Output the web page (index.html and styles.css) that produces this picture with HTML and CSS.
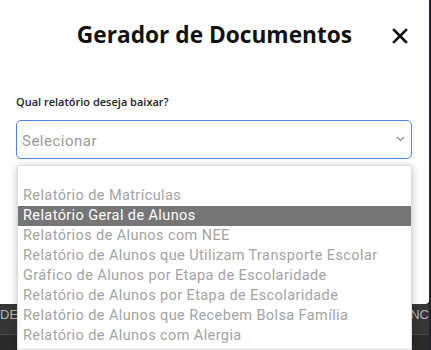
FILE: index.html
```html
<!DOCTYPE html>
<html lang="pt">
<head>
<meta charset="utf-8">
<title>Gerador de Documentos</title>
<link rel="stylesheet" href="styles.css">
</head>
<body>
<div class="page">
  <div class="modal">
    <div class="header">
      <span></span>
      <h1 class="title">Gerador de Documentos</h1>
      <button class="close" aria-label="Fechar">
        <svg width="16" height="16" viewBox="0 0 16 16"><path d="M2 2 L14 14 M14 2 L2 14" stroke="#111" stroke-width="2.6" stroke-linecap="square"/></svg>
      </button>
    </div>
    <label class="label">Qual relatório deseja baixar?</label>
    <div class="select-wrap">
      <div class="select">
        <span class="placeholder">Selecionar</span>
        <svg class="chev" width="9" height="6" viewBox="0 0 9 6"><path d="M1 1 L4.5 4.5 L8 1" fill="none" stroke="#888" stroke-width="1.2"/></svg>
      </div>
      <ul class="options">
        <li class="opt"></li>
        <li class="opt">Relatório de Matrículas</li>
        <li class="opt active">Relatório Geral de Alunos</li>
        <li class="opt">Relatórios de Alunos com NEE</li>
        <li class="opt">Relatório de Alunos que Utilizam Transporte Escolar</li>
        <li class="opt">Gráfico de Alunos por Etapa de Escolaridade</li>
        <li class="opt">Relatório de Alunos por Etapa de Escolaridade</li>
        <li class="opt">Relatório de Alunos que Recebem Bolsa Família</li>
        <li class="opt">Relatório de Alunos com Alergia</li>
      </ul>
    </div>
  </div>
  <div class="below">
    <div class="below-row"><span class="b-left">DE</span><span class="b-right">ANC</span></div>
  </div>
</div>
</body>
</html>
```
FILE: styles.css
```css
* { box-sizing: border-box; }
html, body { margin: 0; padding: 0; }
body {
  background: #2a2a2a;
  width: 431px;
  height: 350px;
  overflow: hidden;
  font-family: "Open Sans", "Liberation Sans", sans-serif;
}
.page {
  display: flex;
  flex-direction: column;
  padding-right: 2px;
  background: #1e2630;
  height: 350px;
}
.modal {
  background: #fff;
  height: 304px;
  border-bottom-right-radius: 4px;
  padding: 19px 0 0 16px;
  position: relative;
}
.header {
  display: grid;
  grid-template-columns: 1fr auto 1fr;
  align-items: center;
  height: 32px;
  margin-left: -16px;
}
.title {
  margin: 0;
  font-family: "Open Sans", sans-serif;
  font-weight: 700;
  font-size: 22.7px;
  color: #111;
  letter-spacing: 0;
  line-height: 32px;
}
.close {
  justify-self: end;
  margin-right: 20px;
  margin-top: 2px;
  width: 18px;
  height: 18px;
  padding: 0;
  border: 0;
  background: none;
  display: flex;
  align-items: center;
  justify-content: center;
}
.label {
  display: block;
  margin-top: 44px;
  font-family: "Open Sans", sans-serif;
  font-weight: 600;
  font-size: 11px;
  line-height: 14px;
  color: #222;
}
.select-wrap {
  position: relative;
  margin-top: 11px;
  width: 396px;
}
.select {
  height: 39px;
  border: 1px solid #4a86e8;
  border-radius: 5px;
  display: flex;
  align-items: center;
  justify-content: space-between;
  padding: 0 6px 0 5px;
}
.placeholder {
  font-family: Roboto, "Liberation Sans", sans-serif;
  font-size: 15px;
  letter-spacing: 0.5px;
  color: #9a9a9a;
  margin-top: 3px;
}
.chev { margin-top: -1px; }
.options {
  position: absolute;
  left: 1px;
  top: 45px;
  width: 395px;
  margin: 0;
  padding: 0 0 3px;
  list-style: none;
  background: #fff;
  border: 1px solid #dcdcdc;
  box-shadow: 0 2px 8px rgba(0,0,0,0.25);
  z-index: 2;
}
.opt {
  height: 20px;
  line-height: 20px;
  padding-left: 5px;
  font-family: Roboto, "Liberation Sans", sans-serif;
  font-size: 14.5px;
  letter-spacing: 0.4px;
  color: #a3a3a3;
  white-space: nowrap;
}
.opt.active {
  background: #767676;
  color: #fff;
}
.below {
  flex: 1;
  display: flex;
  flex-direction: column;
  background: #2b2b2b;
}
.below-row {
  height: 31px;
  background: #363636;
  border-bottom: 1px solid #4a4a4a;
  display: flex;
  justify-content: space-between;
  color: #b8b8b8;
  font-family: "Liberation Sans", sans-serif;
  font-size: 13px;
  line-height: 16px;
  padding-top: 3px;
}
.b-left { margin-left: 0; }
.b-right { margin-right: 0; }
```
